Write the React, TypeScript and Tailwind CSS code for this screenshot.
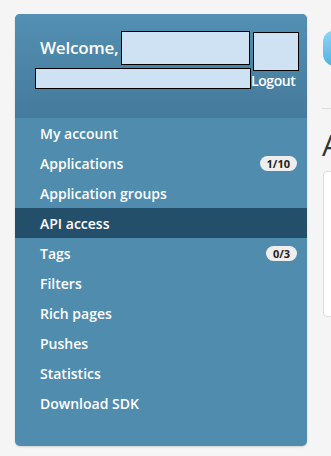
const items: { label: string; badge?: string; active?: boolean }[] = [
  { label: "My account" },
  { label: "Applications", badge: "1/10" },
  { label: "Application groups" },
  { label: "API access", active: true },
  { label: "Tags", badge: "0/3" },
  { label: "Filters" },
  { label: "Rich pages" },
  { label: "Pushes" },
  { label: "Statistics" },
  { label: "Download SDK" },
];

function Redacted({ className }: { className: string }) {
  return <div className={`border border-black bg-[#cfe2f3] ${className}`} />;
}

export default function App() {
  return (
    <div
      className="flex h-[456px] w-[331px] gap-[15px] overflow-hidden bg-[#f5f5f5] pl-[15px] pt-[14px]"
      style={{ fontFamily: '"Open Sans", "Liberation Sans", sans-serif' }}
    >
      {/* Sidebar */}
      <div className="flex h-[432px] w-[292px] shrink-0 flex-col overflow-hidden rounded-[5px] bg-[#4f8cae] shadow-[0_1px_2px_rgba(0,0,0,0.15)]">
        <div className="flex h-[104px] shrink-0 gap-[2px] bg-gradient-to-b from-[#5390b3] to-[#457a9a] pl-[20px] pt-[17px]">
          <div className="flex flex-col gap-[3px]">
            <div className="flex items-center gap-[3px]">
              <span className="ml-[5px] text-[17px] font-semibold tracking-[-0.2px] text-white">Welcome,</span>
              <Redacted className="h-[34px] w-[129px]" />
            </div>
            <Redacted className="h-[21px] w-[216px]" />
          </div>
          <div className="flex flex-col pt-[1px]">
            <Redacted className="h-[39px] w-[46px]" />
            <span className="-ml-[2px] text-[14px] leading-[20px] font-semibold tracking-[-0.4px] text-white">Logout</span>
          </div>
        </div>
        <ul className="flex flex-col">
          {items.map((it) => (
            <li
              key={it.label}
              className={`flex h-[30px] items-center justify-between pl-[25px] pr-[10px] text-[14px] font-semibold text-white ${
                it.active ? "bg-[#244f6b]" : ""
              }`}
            >
              <span>{it.label}</span>
              {it.badge && (
                <span className="rounded-full bg-[#eeeeee] px-[7px] text-[11px] leading-[15px] font-bold text-[#222]">
                  {it.badge}
                </span>
              )}
            </li>
          ))}
        </ul>
      </div>

      {/* Right content (cut off at window edge) */}
      <div className="flex min-w-0 flex-1 flex-col">
        <div className="mt-[16px] ml-[1px] h-[36px] w-[30px] rounded-[12px] bg-gradient-to-b from-[#8fd6f5] to-[#4fb2e2]" />
        <div className="mt-[42px] h-px w-full bg-[#dddddd]" />
        <div className="mt-[18px] whitespace-nowrap text-[30px] leading-[36px] text-[#333]">API access</div>
        <div className="mt-[8px] ml-[1px] h-[146px] w-[200px] shrink-0 rounded-[4px] border border-[#dddddd] bg-white" />
      </div>
    </div>
  );
}
